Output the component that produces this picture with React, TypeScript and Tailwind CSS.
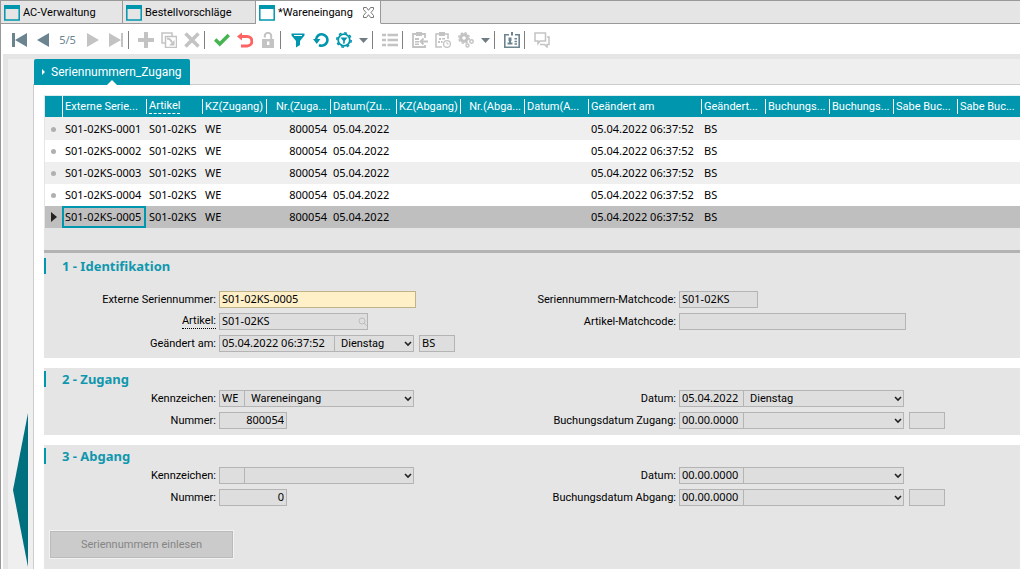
import React, { useId, useState } from 'react';

const TEAL = '#0096ae';
const SLATE = '#6b8490';
const MUTED = '#c3c3c3';

type IconProps = { children: React.ReactNode };

const Icon = ({ children }: IconProps) => (
	<svg width="16" height="16" viewBox="0 0 16 16" fill="none" aria-hidden="true">
		{children}
	</svg>
);

const FirstIcon = () => (
	<Icon>
		<path d="M0 1h3v14H0zM15 1v14L3 8z" fill={SLATE} />
	</Icon>
);

const PrevIcon = () => (
	<Icon>
		<path d="M14 1v14L2 8z" fill={SLATE} />
	</Icon>
);

const NextIcon = () => (
	<Icon>
		<path d="M2 1v14l12-7z" fill={MUTED} />
	</Icon>
);

const LastIcon = () => (
	<Icon>
		<path d="M1 1v14l12-7zM13 1h2v14h-2z" fill={MUTED} />
	</Icon>
);

const PlusIcon = () => (
	<Icon>
		<path d="M6 0h4v6h6v4h-6v6H6v-6H0V6h6z" fill={MUTED} />
	</Icon>
);

const CopyIcon = () => (
	<Icon>
		<path d="M4 11H1V1h10v3M4.500 4.500h11v11h-11z" stroke={MUTED} strokeWidth="1.500" />
		<path d="M6 6.500c2.500 0 4 1.500 5 4" stroke={MUTED} strokeWidth="1.800" />
		<path d="M13.500 8v5.500H8z" fill={MUTED} />
	</Icon>
);

const DeleteIcon = () => (
	<Icon>
		<path d="M1.500 1.500l13 13M14.500 1.500l-13 13" stroke={MUTED} strokeWidth="3.600" />
	</Icon>
);

const CheckIcon = () => (
	<Icon>
		<path d="M1.200 7.500l4.600 4.500 9-9" stroke="#46b450" strokeWidth="3.600" />
	</Icon>
);

const UndoIcon = () => (
	<Icon>
		<path d="M4 4.500h6.200a4.700 4.700 0 0 1 0 9.400H4" stroke="#ff6464" strokeWidth="3" />
		<path d="M5 .5v8L0 4.500z" fill="#ff6464" />
	</Icon>
);

// shackle stays open on the left side
const LockIcon = () => (
	<Icon>
		<path d="M4.800 5.500V4a3.200 3.200 0 0 1 6.400 0v4" stroke={MUTED} strokeWidth="2" />
		<path d="M2 7h12v9H2z" fill={MUTED} />
		<path d="M7 9.500h2.400v3.500H7z" fill="#fff" />
	</Icon>
);

const FunnelIcon = () => (
	<Icon>
		<path d="M1.500 1.500h13v2L10 9v4l-4 2.500V9L1.500 3.500z" fill={TEAL} />
		<path d="M4 3.500h8" stroke="#fff" strokeWidth="1" />
	</Icon>
);

const RefreshIcon = () => (
	<Icon>
		<path d="M3 7.500A5.700 5.700 0 1 1 6 13" stroke={TEAL} strokeWidth="2.600" />
		<path d="M0 7h7.400l-3.600 5z" fill={TEAL} />
	</Icon>
);

const GearFilterIcon = () => (
	<Icon>
		<circle cx="8" cy="8" r="7.200" stroke={TEAL} strokeWidth="1.600" strokeDasharray="2.800 2.850" />
		<circle cx="8" cy="8" r="5.800" stroke={TEAL} strokeWidth="1.800" />
		<path d="M4.500 5.500h7L8.800 9v2.300l-1.600.7V9z" fill={TEAL} />
	</Icon>
);

const ListIcon = () => (
	<Icon>
		<path d="M0 3h4M0 8h4M0 13h4M5.500 3H16M5.500 8H16M5.500 13H16" stroke={MUTED} strokeWidth="2.400" />
	</Icon>
);

const ClipboardInIcon = () => (
	<Icon>
		<path d="M13 6V2H1v13h12v-2" stroke={MUTED} strokeWidth="1.800" />
		<path d="M4 0h6v4H4zM3 6h4v2H3zM3 9h4v1.500H3zM3 11.500h4V13H3z" fill={MUTED} />
		<path d="M16 9.500H9M11.500 6.500l-3 3 3 3" stroke={MUTED} strokeWidth="1.800" />
	</Icon>
);

const ClipboardClockIcon = () => (
	<Icon>
		<path d="M13 7V2H1v13h6" stroke={MUTED} strokeWidth="1.600" />
		<path d="M4 0h6v4H4zM4 6h2v2H4zM7 6h3v1.500H7zM3 9h2v2H3zM6 9h1.500v2H6z" fill={MUTED} />
		<circle cx="12" cy="12" r="3.400" stroke={MUTED} strokeWidth="1.300" />
		<path d="M12 10v2h1.500" stroke={MUTED} />
	</Icon>
);

const GearsIcon = () => (
	<Icon>
		<circle cx="6" cy="6" r="3.300" stroke={MUTED} strokeWidth="3" />
		<circle cx="6" cy="6" r="5.200" stroke={MUTED} strokeWidth="1.600" strokeDasharray="2.300 1.780" />
		<circle cx="13.500" cy="9.500" r="1.700" stroke={MUTED} strokeWidth="1.500" />
		<circle cx="9.500" cy="13.500" r="1.500" stroke={MUTED} strokeWidth="1.400" />
	</Icon>
);

const BadgeIcon = () => (
	<Icon>
		<path d="M5 2.800H.8v12.400h14.400V2.800H11" stroke={SLATE} strokeWidth="1.600" />
		<path d="M7 0h2v3.500H7zM4.500 5.500h3v3.500h-3zM5 9h2v1.500h1.500v2h-5v-2H5zM10.500 6h2.500v1.500h-2.500zM10.500 8.700h2.500v1.500h-2.500zM10.500 11.300h2.500v1.500h-2.500z" fill={SLATE} />
	</Icon>
);

const ChatIcon = () => (
	<Icon>
		<path d="M1 1h10.500v8H6l-2 2.500V9H1z" stroke={MUTED} strokeWidth="1.500" />
		<path d="M13 5h2v7.500h-2V15l-2.500-2.500H6" stroke={MUTED} strokeWidth="1.500" />
	</Icon>
);

const WindowIcon = () => (
	<Icon>
		<path d="M.8 1h14.400v14H.8z" stroke={TEAL} strokeWidth="1.500" />
		<path d="M0 0h16v4H0z" fill={TEAL} />
	</Icon>
);

const CloseIcon = () => (
	<svg width="11" height="11" viewBox="0 0 11 11" fill="none" aria-hidden="true">
		<path
			d="M.5.500h3l2 2.800 2-2.800h3v2L8 5.500l2.500 3v2h-3l-2-2.800-2 2.800h-3v-2l2.500-3-2.500-3z"
			stroke="#777"
		/>
	</svg>
);

type ToolProps = { label: string; children: React.ReactNode };

const Tool = ({ label, children }: ToolProps) => (
	<button type="button" aria-label={label} className="flex w-[23px] shrink-0 justify-center">
		{children}
	</button>
);

const Caret = ({ label }: { label: string }) => (
	<button type="button" aria-label={label} className="flex w-4 shrink-0 justify-center">
		<svg width="9" height="5" viewBox="0 0 9 5" aria-hidden="true">
			<path d="M0 0h9L4.500 5z" fill="#707c84" />
		</svg>
	</button>
);

const Divider = () => <span className="mr-[5px] ml-px h-[18px] w-px shrink-0 bg-[#808080]" />;

const Toolbar = () => (
	<div className="flex h-[30px] items-center bg-white pt-0.5 pl-[7px]">
		<Tool label="Erster Datensatz"><FirstIcon /></Tool>
		<Tool label="Vorheriger Datensatz"><PrevIcon /></Tool>
		<span className="w-[27px] text-center text-[11px] text-[#6b8490]">5/5</span>
		<Tool label="Nächster Datensatz"><NextIcon /></Tool>
		<Tool label="Letzter Datensatz"><LastIcon /></Tool>
		<Divider />
		<Tool label="Neu"><PlusIcon /></Tool>
		<Tool label="Kopieren"><CopyIcon /></Tool>
		<Tool label="Löschen"><DeleteIcon /></Tool>
		<Divider />
		<Tool label="Speichern"><CheckIcon /></Tool>
		<Tool label="Verwerfen"><UndoIcon /></Tool>
		<Tool label="Sperren"><LockIcon /></Tool>
		<Divider />
		<Tool label="Filter"><FunnelIcon /></Tool>
		<Tool label="Aktualisieren"><RefreshIcon /></Tool>
		<Tool label="Filter einstellen"><GearFilterIcon /></Tool>
		<Caret label="Filter Menü" />
		<Divider />
		<Tool label="Liste"><ListIcon /></Tool>
		<Divider />
		<Tool label="Übernehmen"><ClipboardInIcon /></Tool>
		<Tool label="Termin"><ClipboardClockIcon /></Tool>
		<Tool label="Aktionen"><GearsIcon /></Tool>
		<Caret label="Aktionen Menü" />
		<Divider />
		<Tool label="Info"><BadgeIcon /></Tool>
		<Divider />
		<Tool label="Notizen"><ChatIcon /></Tool>
	</div>
);

const WindowTabs = () => (
	<div className="flex h-6 border-t border-[#999] bg-[#e5e5e5] font-[Roboto,sans-serif] text-[11px]">
		<button type="button" className="flex w-[122px] items-center gap-[3px] border-r border-b border-[#999] pt-px pl-[3px]">
			<WindowIcon />
			<span className="pt-0.5">AC-Verwaltung</span>
		</button>
		<button type="button" className="flex w-[133px] items-center gap-[3px] border-r border-b border-[#999] pt-px pl-[3px]">
			<WindowIcon />
			<span className="pt-0.5">Bestellvorschläge</span>
		</button>
		<button type="button" className="flex w-[125px] items-center gap-[3px] border-r border-b border-r-[#999] border-b-white bg-white pt-px pl-[3px]">
			<WindowIcon />
			<span className="pt-0.5">*Wareneingang</span>
			<span className="mr-1.5 ml-auto">
				<CloseIcon />
			</span>
		</button>
		<div className="flex-1 border-b border-[#999]" />
	</div>
);

type Column = { title: string; width?: string; right?: boolean; underline?: boolean };

const columns: Column[] = [
	{ title: 'Externe Serie...', width: 'w-[84px]' },
	{ title: 'Artikel', width: 'w-[56px]', underline: true },
	{ title: 'KZ(Zugang)', width: 'w-[64px]' },
	{ title: 'Nr.(Zuga...', width: 'w-[64px]', right: true },
	{ title: 'Datum(Zu...', width: 'w-[66px]' },
	{ title: 'KZ(Abgang)', width: 'w-[64px]' },
	{ title: 'Nr.(Abga...', width: 'w-[64px]', right: true },
	{ title: 'Datum(A...', width: 'w-[64px]' },
	{ title: 'Geändert am', width: 'w-[113px]' },
	{ title: 'Geändert...', width: 'w-[64px]' },
	{ title: 'Buchungs...', width: 'w-[64px]' },
	{ title: 'Buchungs...', width: 'w-[64px]' },
	{ title: 'Sabe Buc...', width: 'w-[64px]' },
	{ title: 'Sabe Buc...' },
];

const serials = ['S01-02KS-0001', 'S01-02KS-0002', 'S01-02KS-0003', 'S01-02KS-0004', 'S01-02KS-0005'];

const toCells = (serial: string) => [
	serial, 'S01-02KS', 'WE', '800054', '05.04.2022', '', '', '', '05.04.2022 06:37:52', 'BS', '', '', '', '',
];

const rowColor = (index: number, selected: boolean) => {
	if (selected) return 'bg-[#bfbfbf]';
	return index % 2 === 0 ? 'bg-[#efefef]' : 'bg-white';
};

const SerialTable = () => {
	const [selected, setSelected] = useState<number>(4);

	return (
		<div className="border-b-[3px] border-[#b3b3b3] bg-[#e5e5e5] pb-[22px] pl-px">
			<table className="w-full table-fixed border-separate border-spacing-0 text-[11px] whitespace-nowrap">
				<thead>
					<tr className="text-left font-[Roboto,sans-serif] text-white">
						<th aria-label="Status" className="h-[23px] w-[17px] border-y border-t-[#dcebee] border-b-[#efefef] bg-[#0096ae] p-0" />
						{columns.map((column, i) => (
							<th
								key={i}
								className={`h-[23px] border-t border-b border-t-[#dcebee] border-b-[#efefef] bg-[#0096ae] p-0 font-normal ${column.width ?? ''} ${i === 0 ? 'border-l border-l-white' : ''}`}
							>
								<div
									className={`h-[15px] overflow-hidden leading-[16px] ${i === 0 ? 'pl-0.5' : 'border-l border-white pl-0.5'} ${column.right ? 'pr-[3px] text-right' : ''}`}
								>
									{column.underline ? (
										<span className="block w-fit border-b border-dashed border-white leading-[14px]">{column.title}</span>
									) : (
										column.title
									)}
								</div>
							</th>
						))}
					</tr>
				</thead>
				<tbody>
					{serials.map((serial, row) => (
						<tr key={serial} onClick={() => setSelected(row)} className={rowColor(row, row === selected)}>
							<td className="h-[22px] p-0">
								{row === selected ? (
									<svg width="6" height="10" viewBox="0 0 6 10" className="ml-1.5" aria-hidden="true">
										<path d="M0 0v10l6-5z" fill="#222" />
									</svg>
								) : (
									<span className="ml-1.5 block size-[5px] rounded-full bg-[#b0b0b0]" />
								)}
							</td>
							{toCells(serial).map((cell, i) => (
								<td
									key={i}
									className={`h-[22px] p-0 pl-[3px] ${columns[i].right ? 'pr-[3px] text-right' : ''} ${row === selected && i === 0 ? 'outline-2 -outline-offset-2 outline-[#0096ae]' : ''}`}
								>
									{cell}
								</td>
							))}
						</tr>
					))}
				</tbody>
			</table>
		</div>
	);
};

type FieldProps = {
	label: string;
	value: string;
	width: string;
	day?: string;
	dayWidth?: string;
	extra?: string;
	highlight?: boolean;
	search?: boolean;
	right?: boolean;
	underline?: boolean;
};

const box = 'h-[17px] border border-[#b4b4b4] bg-[#dedede] px-0.5 pb-0.5 leading-[13px] outline-none';

const Field = ({ label, value, width, day, dayWidth, extra, highlight, search, right, underline }: FieldProps) => {
	const id = useId();

	return (
		<div className="flex h-[17px] items-center text-[11px]">
			<div className="mr-[3px] flex w-[172px] shrink-0 justify-end font-[Roboto,sans-serif]">
				<label htmlFor={id} className={`leading-[14px] ${underline ? 'border-b border-dotted border-black' : ''}`}>
					{label}
				</label>
			</div>
			<div className="relative flex">
				<input
					id={id}
					defaultValue={value}
					className={`${highlight ? 'h-[17px] border border-[#c0b387] bg-[#fff0c8] px-0.5 pb-0.5 leading-[13px] outline-none' : box} ${width} ${right ? 'text-right' : ''}`}
				/>
				{search && (
					<svg width="9" height="9" viewBox="0 0 9 9" fill="none" className="absolute top-1 right-px" aria-hidden="true">
						<circle cx="4" cy="4" r="3" stroke="#bdbdbd" />
						<path d="M6 6l3 3" stroke="#bdbdbd" />
					</svg>
				)}
			</div>
			{day !== undefined && (
				<div className="relative flex">
					<select
						aria-label={`${label} Auswahl`}
						className={`h-[17px] appearance-none border border-l-0 border-[#b4b4b4] bg-[#dedede] pl-1.5 font-[Roboto,sans-serif] leading-[15px] outline-none ${dayWidth ?? ''}`}
					>
						<option>{day}</option>
					</select>
					<svg width="8" height="6" viewBox="0 0 8 6" fill="none" className="pointer-events-none absolute top-1.5 right-[2px]" aria-hidden="true">
						<path d="M1 1l3 3 3-3" stroke="#222" strokeWidth="1.600" />
					</svg>
				</div>
			)}
			{extra !== undefined && (
				<input aria-label={`${label} Kürzel`} defaultValue={extra} className={`${box} ml-[5px] w-[36px]`} />
			)}
		</div>
	);
};

type SectionProps = { title: string; className: string; bodyClassName: string; left: React.ReactNode; right: React.ReactNode; children?: React.ReactNode };

const Section = ({ title, className, bodyClassName, left, right, children }: SectionProps) => (
	<section className={`bg-[#e5e5e5] ${className}`}>
		<h2 className="border-l-2 border-[#0096ae] pl-4 text-[13px] leading-4 font-bold text-[#0f97ae]">{title}</h2>
		<div className={`flex ${bodyClassName}`}>
			<div className="flex w-[460px] shrink-0 flex-col gap-[5px]">{left}</div>
			<div className="flex flex-col gap-[5px]">{right}</div>
		</div>
		{children}
	</section>
);

const App = () => {
	return (
		<div className="flex min-h-screen flex-col overflow-hidden border-l border-[#999] bg-white font-['Noto_Sans',sans-serif] text-black">
			<WindowTabs />
			<Toolbar />
			<div className="ml-0.5 flex flex-1 border-t-[5px] border-l-[5px] border-[#e5e5e5] bg-[#efefef]">
				<aside className="flex w-[25px] shrink-0 flex-col justify-end pb-0.5 pl-[5px]">
					<button type="button" aria-label="Seitenleiste öffnen">
						<svg width="15" height="154" viewBox="0 0 15 154" aria-hidden="true">
							<path d="M15 0v154L0 77z" fill="#00707f" />
						</svg>
					</button>
				</aside>
				<div className="flex min-w-0 flex-1 flex-col">
					<nav className="flex border-b border-[#ccc] pl-px">
						<button
							type="button"
							className="relative -mb-px flex h-[26px] w-[156px] items-center rounded-t-xs bg-[#0096ae] pl-2 font-[Roboto,sans-serif] text-[12px] text-white"
						>
							<svg width="3" height="6" viewBox="0 0 3 6" className="mr-1.5" aria-hidden="true">
								<path d="M0 0v6l3-3z" fill="#fff" />
							</svg>
							Seriennummern_Zugang
							<svg width="10" height="5" viewBox="0 0 10 5" className="absolute bottom-0 left-[73px]" aria-hidden="true">
								<path d="M0 5l5-5 5 5z" fill="#fff" />
							</svg>
						</button>
					</nav>
					<main className="flex flex-1 flex-col border-l border-[#ccc] bg-white pt-2.5 pl-2.5">
						<SerialTable />
						<form className="flex flex-1 flex-col gap-2.5">
							<Section
								title="1 - Identifikation"
								className="pt-[5px] pb-1.5"
								bodyClassName="mt-[17px]"
								left={
									<>
										<Field label="Externe Seriennummer:" value="S01-02KS-0005" width="w-[197px]" highlight />
										<Field label="Artikel:" value="S01-02KS" width="w-[149px]" search underline />
										<Field label="Geändert am:" value="05.04.2022 06:37:52" width="w-[116px]" day="Dienstag" dayWidth="w-[79px]" extra="BS" />
									</>
								}
								right={
									<>
										<Field label="Seriennummern-Matchcode:" value="S01-02KS" width="w-[79px]" />
										<Field label="Artikel-Matchcode:" value="" width="w-[227px]" />
									</>
								}
							/>
							<Section
								title="2 - Zugang"
								className="pt-[3px] pb-1.5"
								bodyClassName="mt-[3px]"
								left={
									<>
										<Field label="Kennzeichen:" value="WE" width="w-[26px]" day="Wareneingang" dayWidth="w-[169px]" />
										<Field label="Nummer:" value="800054" width="w-[68px]" right />
									</>
								}
								right={
									<>
										<Field label="Datum:" value="05.04.2022" width="w-[65px]" day="Dienstag" dayWidth="w-[160px]" />
										<Field label="Buchungsdatum Zugang:" value="00.00.0000" width="w-[65px]" day="" dayWidth="w-[160px]" extra="" />
									</>
								}
							/>
							<Section
								title="3 - Abgang"
								className="flex-1 pt-[3px] pb-2.5"
								bodyClassName="mt-[3px]"
								left={
									<>
										<Field label="Kennzeichen:" value="" width="w-[26px]" day="" dayWidth="w-[169px]" />
										<Field label="Nummer:" value="0" width="w-[68px]" right />
									</>
								}
								right={
									<>
										<Field label="Datum:" value="00.00.0000" width="w-[65px]" day="" dayWidth="w-[160px]" />
										<Field label="Buchungsdatum Abgang:" value="00.00.0000" width="w-[65px]" day="" dayWidth="w-[160px]" extra="" />
									</>
								}
							>
								<button
									type="button"
									className="mt-[25px] ml-1.5 h-[27px] w-[183px] border border-[#bbb] bg-[#cbcbcb] pt-px font-[Roboto,sans-serif] text-[11px] text-[#858585] outline outline-[#f2f2f2]"
								>
									Seriennummern einlesen
								</button>
							</Section>
						</form>
					</main>
				</div>
			</div>
		</div>
	);
};

export default App;
